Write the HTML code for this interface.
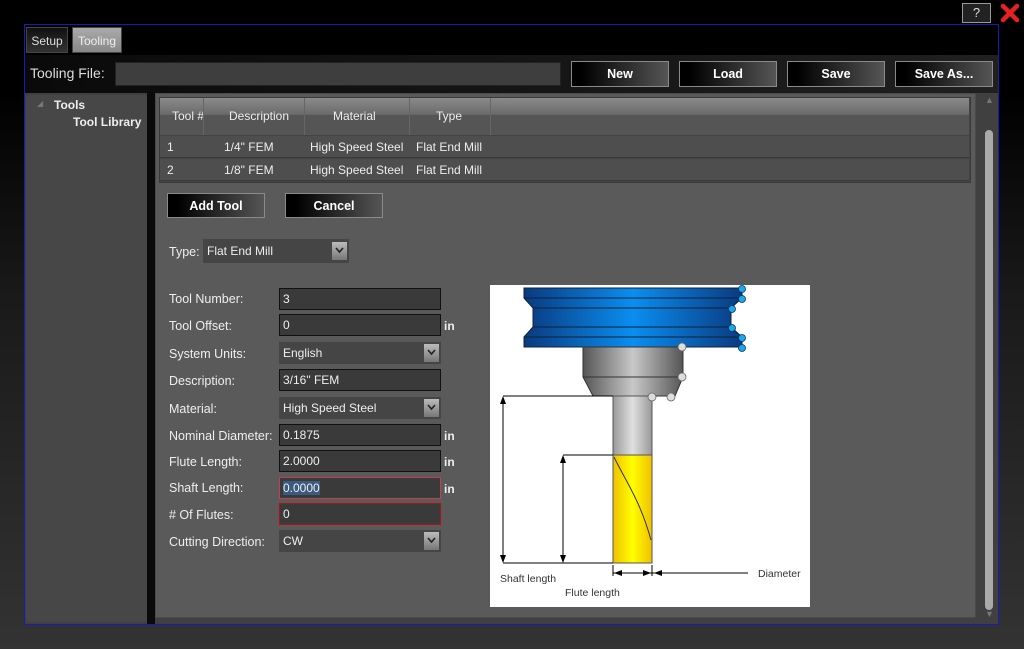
<!DOCTYPE html>
<html><head><meta charset="utf-8"><style>
*{margin:0;padding:0;box-sizing:border-box}
body{width:1024px;height:649px;overflow:hidden;background:linear-gradient(#000 0,#000 90px,#1a1a1a 300px,#333 649px);font-family:"Liberation Sans",sans-serif;font-size:12px;color:#eee;position:relative}
.a{position:absolute}
.frame{left:24px;top:24px;width:975px;height:601px;border:1px solid #1a1ab8;background:#000}
.inner{left:25px;top:90px;width:973px;height:534px;background:#404040}
.tab{top:27px;height:26px;font-size:12px;line-height:26px;text-align:center;border:1px solid #444}
.btn{height:26px;border:1px solid #8a8a8a;background:linear-gradient(90deg,#000 10%,#555);font-weight:bold;color:#fff;text-align:center;line-height:24px;font-size:12.5px}
.inp{height:22px;width:162px;left:279px;background:#3a3a3a;border:1px solid #111;line-height:20px;padding-left:3px;font-size:12px}
.sel{height:22px;width:162px;left:279px;background:#454545;line-height:22px;padding-left:4px;font-size:12px}
.dd{position:absolute;right:2px;top:2px;width:15px;height:18px;background:linear-gradient(#bbb,#777)}
.dd svg{position:absolute;left:3px;top:5px}
.lbl{left:169px;font-size:12.5px;color:#eee}
.in{left:444px;font-weight:bold;font-size:12px}
.row{left:160px;width:809px;height:22px;background:#4e4e4e;border-bottom:1px solid #3a3a3a;line-height:22px}
.row span,.hd span{position:absolute}
</style></head><body>
<div class="a frame"></div>
<div class="a inner"></div>
<div class="a" style="left:25px;top:55px;width:973px;height:38px;background:linear-gradient(90deg,#0a0a0a,#202020)"></div>
<div class="a tab" style="left:26px;width:42px;background:linear-gradient(#111,#333);color:#ddd">Setup</div>
<div class="a tab" style="left:72px;width:50px;background:linear-gradient(#aaa,#888);color:#eee">Tooling</div>
<div class="a" style="left:30px;top:65px;font-size:14px;color:#ddd">Tooling File:</div>
<div class="a" style="left:115px;top:62px;width:446px;height:24px;background:#3e3e3e;border:1px solid #222"></div>
<div class="a btn" style="left:571px;top:61px;width:98px">New</div>
<div class="a btn" style="left:679px;top:61px;width:98px">Load</div>
<div class="a btn" style="left:787px;top:61px;width:98px">Save</div>
<div class="a btn" style="left:895px;top:61px;width:98px">Save As...</div>
<div class="a" style="left:962px;top:3px;width:29px;height:20px;border:1px solid #999;background:#222;color:#ddd;text-align:center;line-height:18px;font-size:13px">?</div>
<svg class="a" style="left:1000px;top:3px" width="20" height="20"><path d="M3 3L17 17M17 3L3 17" stroke="#e82020" stroke-width="4.5" stroke-linecap="round"/></svg>
<!-- left panel -->
<div class="a" style="left:147px;top:92px;width:8px;height:532px;background:#0a0a0a"></div>
<div class="a" style="left:26px;top:95px;width:121px;height:527px;background:#474747;border-radius:3px"></div>
<div class="a" style="left:37px;top:99px;color:#777;font-size:8px">◢</div>
<div class="a" style="left:54px;top:98px;font-weight:bold;font-size:12px">Tools</div>
<div class="a" style="left:73px;top:115px;font-weight:bold;font-size:12px">Tool Library</div>
<!-- main panel -->
<div class="a" style="left:155px;top:93px;width:821px;height:525px;background:#5a5a5a;border:1px solid #4a4a4a"></div>
<div class="a" style="left:159px;top:97px;width:812px;height:86px;background:#444;border:1px solid #3a3a3a"></div>
<div class="a hd" style="left:160px;top:98px;width:809px;height:37px;background:linear-gradient(#8a8a8a,#6a6a6a 45%,#555 46%,#555)">
<span style="left:12px;top:11px">Tool #</span><span style="left:69px;top:11px">Description</span><span style="left:173px;top:11px">Material</span><span style="left:276px;top:11px">Type</span>
<span style="left:43px;top:0;width:1px;height:37px;background:#666"></span><span style="left:144px;top:0;width:1px;height:37px;background:#666"></span><span style="left:249px;top:0;width:1px;height:37px;background:#666"></span><span style="left:330px;top:0;width:1px;height:37px;background:#666"></span>
</div>
<div class="a row" style="top:136px"><span style="left:7px">1</span><span style="left:64px">1/4" FEM</span><span style="left:150px">High Speed Steel</span><span style="left:256px">Flat End Mill</span></div>
<div class="a row" style="top:159px"><span style="left:7px">2</span><span style="left:64px">1/8" FEM</span><span style="left:150px">High Speed Steel</span><span style="left:256px">Flat End Mill</span></div>
<div class="a btn" style="left:167px;top:193px;width:98px;height:25px">Add Tool</div>
<div class="a btn" style="left:285px;top:193px;width:98px;height:25px">Cancel</div>
<div class="a lbl" style="top:245px">Type:</div>
<div class="a sel" style="left:203px;top:239px;width:146px;height:24px;line-height:24px">Flat End Mill<div class="dd" style="top:3px"><svg width="9" height="7"><path d="M1 1L4.5 5L8 1" stroke="#222" stroke-width="1.6" fill="none"/></svg></div></div>
<div class="a lbl" style="top:292px">Tool Number:</div><div class="a inp" style="top:288px">3</div>
<div class="a lbl" style="top:319px">Tool Offset:</div><div class="a inp" style="top:314px">0</div><div class="a in" style="top:319px">in</div>
<div class="a lbl" style="top:347px">System Units:</div><div class="a sel" style="top:342px">English<div class="dd"><svg width="9" height="7"><path d="M1 1L4.5 5L8 1" stroke="#222" stroke-width="1.6" fill="none"/></svg></div></div>
<div class="a lbl" style="top:374px">Description:</div><div class="a inp" style="top:369px">3/16" FEM</div>
<div class="a lbl" style="top:402px">Material:</div><div class="a sel" style="top:397px">High Speed Steel<div class="dd"><svg width="9" height="7"><path d="M1 1L4.5 5L8 1" stroke="#222" stroke-width="1.6" fill="none"/></svg></div></div>
<div class="a lbl" style="top:429px">Nominal Diameter:</div><div class="a inp" style="top:424px">0.1875</div><div class="a in" style="top:429px">in</div>
<div class="a lbl" style="top:455px">Flute Length:</div><div class="a inp" style="top:450px">2.0000</div><div class="a in" style="top:455px">in</div>
<div class="a lbl" style="top:481px">Shaft Length:</div><div class="a inp" style="top:477px;border-color:#c04050"><span style="background:#3a5a80">0.0000</span></div><div class="a in" style="top:482px">in</div>
<div class="a lbl" style="top:508px"># Of Flutes:</div><div class="a inp" style="top:503px;border-color:#b01010">0</div>
<div class="a lbl" style="top:535px">Cutting Direction:</div><div class="a sel" style="top:530px">CW<div class="dd"><svg width="9" height="7"><path d="M1 1L4.5 5L8 1" stroke="#222" stroke-width="1.6" fill="none"/></svg></div></div>
<!-- scrollbar -->
<div class="a" style="left:985px;top:95px;color:#777;font-size:9px">▲</div>
<div class="a" style="left:985px;top:130px;width:8px;height:480px;background:#aaa;border-radius:4px"></div>
<div class="a" style="left:985px;top:609px;color:#777;font-size:9px">▼</div>
<!-- diagram -->
<svg class="a" style="left:490px;top:285px" width="320" height="322" viewBox="490 285 320 322">
<defs>
<linearGradient id="b" x1="0" x2="1"><stop offset="0" stop-color="#0a3a80"/><stop offset=".5" stop-color="#0a8ef0"/><stop offset="1" stop-color="#0a3a80"/></linearGradient>
<linearGradient id="g" x1="0" x2="1"><stop offset="0" stop-color="#555"/><stop offset=".5" stop-color="#c8c8c8"/><stop offset="1" stop-color="#555"/></linearGradient>
<linearGradient id="s" x1="0" x2="1"><stop offset="0" stop-color="#999"/><stop offset=".5" stop-color="#e0e0e0"/><stop offset="1" stop-color="#999"/></linearGradient>
<linearGradient id="y" x1="0" x2="1"><stop offset="0" stop-color="#f0c000"/><stop offset=".5" stop-color="#ffff00"/><stop offset="1" stop-color="#f0c000"/></linearGradient>
</defs>
<rect x="490" y="285" width="320" height="322" fill="#fff"/>
<path d="M524 288H742V298L731 308V327L742 337V347H524V337L533 327V308L524 298Z" fill="url(#b)" stroke="#123" stroke-width="1"/>
<path d="M524 298H742M533 308H731M533 327H731M524 337H742" stroke="#123" stroke-width="1"/>
<path d="M583 347H683V377L675 396H593L583 377Z" fill="url(#g)" stroke="#333" stroke-width="1"/>
<path d="M583 377H683" stroke="#333"/>
<rect x="613" y="396" width="39" height="59" fill="url(#s)" stroke="#555"/>
<rect x="613" y="455" width="39" height="108" fill="url(#y)" stroke="#555"/>
<path d="M614 457C625 480 640 500 651 540" stroke="#333" fill="none"/>
<g stroke="#000" stroke-width="1" fill="none">
<path d="M503 396H613M503 563H613M563 455H613M503 398V561M563 457V561M613 565V576M652 565V576M652 573H748"/>
<path d="M613 573H652"/>
</g>
<g fill="#000"><path d="M503 396l-3 8h6zM503 563l-3-8h6zM563 455l-3 8h6zM563 563l-3-8h6zM614 573l8-3v6zM651 573l-8-3v6zM654 573l8-3v6z"/></g>
<g fill="#19a8e8" stroke="#036" stroke-width=".8"><circle cx="742" cy="289" r="3.5"/><circle cx="742" cy="299" r="3.5"/><circle cx="732" cy="309" r="3.5"/><circle cx="732" cy="328" r="3.5"/><circle cx="742" cy="338" r="3.5"/><circle cx="742" cy="348" r="3.5"/></g>
<g fill="#ddd" stroke="#666" stroke-width=".8"><circle cx="682" cy="347" r="4"/><circle cx="682" cy="377" r="4"/><circle cx="652" cy="397" r="4"/><circle cx="671" cy="397" r="4"/></g>
<g font-family="Liberation Sans" font-size="10.5" fill="#333"><text x="500" y="582">Shaft length</text><text x="565" y="596">Flute length</text><text x="758" y="577">Diameter</text></g>
</svg>
</body></html>
